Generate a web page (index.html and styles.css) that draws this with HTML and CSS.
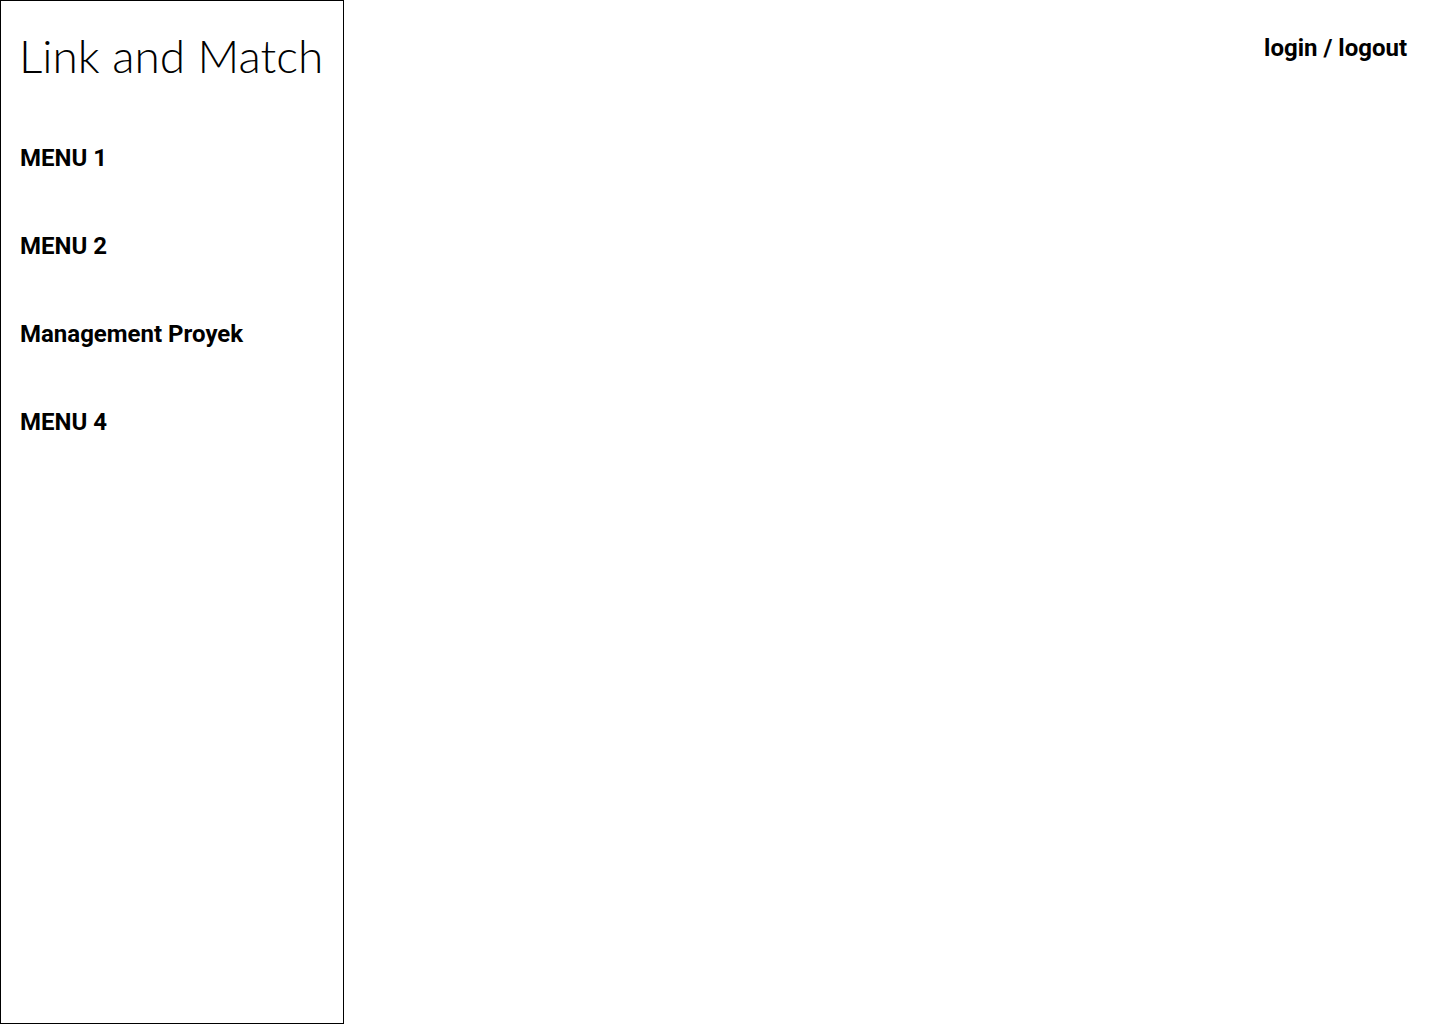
FILE: index.html
```html
<!DOCTYPE html>
<html>
<head>
<meta charset="utf-8">
<link rel="stylesheet" href="styles.css">
</head>
<body>
<div class="page">
  <aside class="sidebar">
    <h1 class="brand">Link and Match</h1>
    <nav class="menu">
      <a class="menu-item">MENU 1</a>
      <a class="menu-item">MENU 2</a>
      <a class="menu-item">Management Proyek</a>
      <a class="menu-item">MENU 4</a>
    </nav>
  </aside>
  <main class="main">
    <header class="topbar">
      <a class="auth">login / logout</a>
    </header>
  </main>
</div>
</body>
</html>
```
FILE: styles.css
```css
html, body { margin: 0; padding: 0; background: #fff; }
body { font-family: Roboto, "Liberation Sans", sans-serif; color: #000; }
.page { display: flex; width: 1440px; height: 1024px; }
.sidebar {
  width: 323px;
  height: 1022px;
  border: 1px solid #000;
  padding: 0 0 0 19px;
  box-sizing: content-box;
}
.brand {
  margin: 0;
  padding-top: 28px;
  font-family: Lato, "Open Sans", sans-serif;
  font-weight: 300;
  font-size: 46px;
  line-height: 54px;
  white-space: nowrap;
  margin-left: -1px;
}
.menu { display: flex; flex-direction: column; margin-top: 61px; gap: 60px; }
.menu-item { font-weight: 700; font-size: 24px; line-height: 28px; }
.main { flex: 1; }
.topbar { display: flex; justify-content: flex-end; padding: 34px 33px 0 0; }
.auth { font-weight: 700; font-size: 24px; line-height: 28px; }
```
